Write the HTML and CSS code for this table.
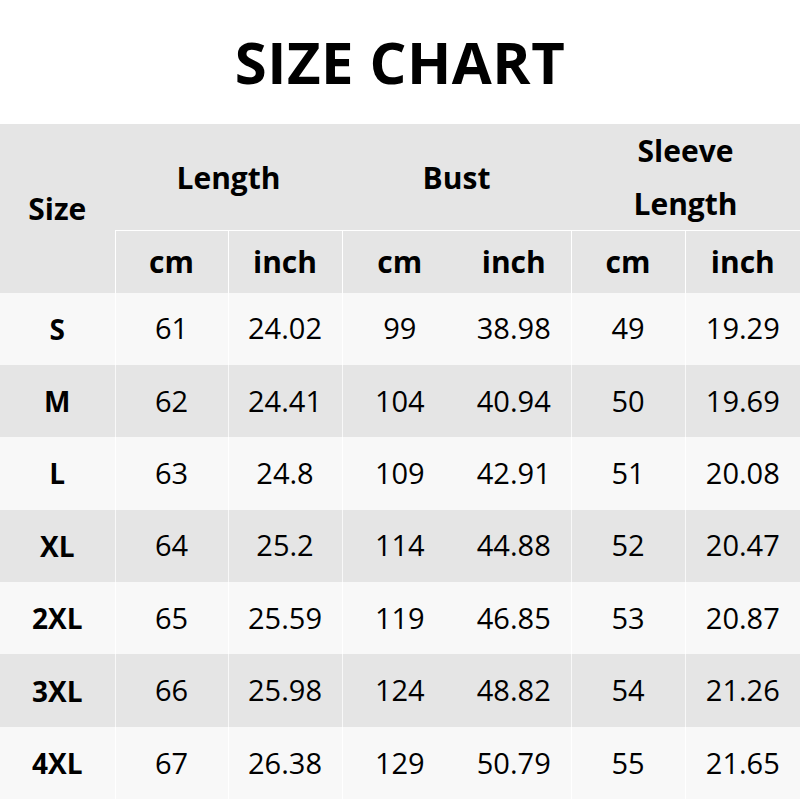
FILE: index.html
```html
<!DOCTYPE html>
<html>
<head>
<meta charset="utf-8">
<link rel="stylesheet" href="styles.css">
</head>
<body>
<div class="page">
  <h1 class="title">SIZE CHART</h1>
  <table class="chart">
    <colgroup>
      <col class="c115"><col class="c113"><col class="c114"><col class="c115"><col class="c114"><col class="c114"><col class="c115">
    </colgroup>
    <thead>
      <tr class="head1">
        <th rowspan="2" class="size-head">Size</th>
        <th colspan="2">Length</th>
        <th colspan="2">Bust</th>
        <th colspan="2" class="two-line">Sleeve<br>Length</th>
      </tr>
      <tr class="head2">
        <th class="sep">cm</th><th class="sep">inch</th><th class="sep">cm</th><th>inch</th><th class="sep">cm</th><th class="sep">inch</th>
      </tr>
    </thead>
    <tbody>
      <tr class="light"><th>S</th><td class="sep">61</td><td class="sep">24.02</td><td class="sep">99</td><td>38.98</td><td class="sep">49</td><td class="sep">19.29</td></tr>
      <tr class="dark"><th>M</th><td class="sep">62</td><td class="sep">24.41</td><td class="sep">104</td><td>40.94</td><td class="sep">50</td><td class="sep">19.69</td></tr>
      <tr class="light"><th>L</th><td class="sep">63</td><td class="sep">24.8</td><td class="sep">109</td><td>42.91</td><td class="sep">51</td><td class="sep">20.08</td></tr>
      <tr class="dark"><th>XL</th><td class="sep">64</td><td class="sep">25.2</td><td class="sep">114</td><td>44.88</td><td class="sep">52</td><td class="sep">20.47</td></tr>
      <tr class="light"><th>2XL</th><td class="sep">65</td><td class="sep">25.59</td><td class="sep">119</td><td>46.85</td><td class="sep">53</td><td class="sep">20.87</td></tr>
      <tr class="dark"><th>3XL</th><td class="sep">66</td><td class="sep">25.98</td><td class="sep">124</td><td>48.82</td><td class="sep">54</td><td class="sep">21.26</td></tr>
      <tr class="light"><th>4XL</th><td class="sep">67</td><td class="sep">26.38</td><td class="sep">129</td><td>50.79</td><td class="sep">55</td><td class="sep">21.65</td></tr>
    </tbody>
  </table>
</div>
</body>
</html>
```
FILE: styles.css
```css
html, body {
  margin: 0;
  padding: 0;
  background: #ffffff;
}
.page {
  width: 800px;
  font-family: "Open Sans", "Noto Sans", sans-serif;
  color: #000;
}
.title {
  margin: 0;
  height: 124px;
  display: flex;
  align-items: center;
  justify-content: center;
  font-size: 58px;
  font-weight: 700;
  letter-spacing: 0.5px;
  padding-bottom: 2px;
  box-sizing: border-box;
}
.chart {
  width: 800px;
  border-collapse: collapse;
  table-layout: fixed;
}
.c115 { width: 115px; }
.c113 { width: 113px; }
.c114 { width: 114px; }
.chart th, .chart td {
  padding: 0;
  text-align: center;
  vertical-align: middle;
}
.chart thead th {
  background: #e5e5e5;
  font-size: 30px;
  font-weight: 700;
}
.head1 { height: 106px; }
.two-line { line-height: 53px; padding-top: 2px; }
.size-head { padding-top: 6px; }
.head2 { height: 62px; }
.head2 th { border-top: 1px solid #ffffff; }
.sep { border-left: 1px solid #ffffff; }
.chart tbody tr { height: 72.4px; }
.chart tbody th {
  font-size: 28px;
  font-weight: 700;
}
.chart tbody td {
  font-size: 29px;
  font-weight: 400;
  padding-bottom: 2px;
}
.light th, .light td { background: #f8f8f8; }
.dark th, .dark td { background: #e5e5e5; }
.light .sep { border-left-color: #ffffff; }
.dark .sep { border-left-color: #f8f8f8; }
```
